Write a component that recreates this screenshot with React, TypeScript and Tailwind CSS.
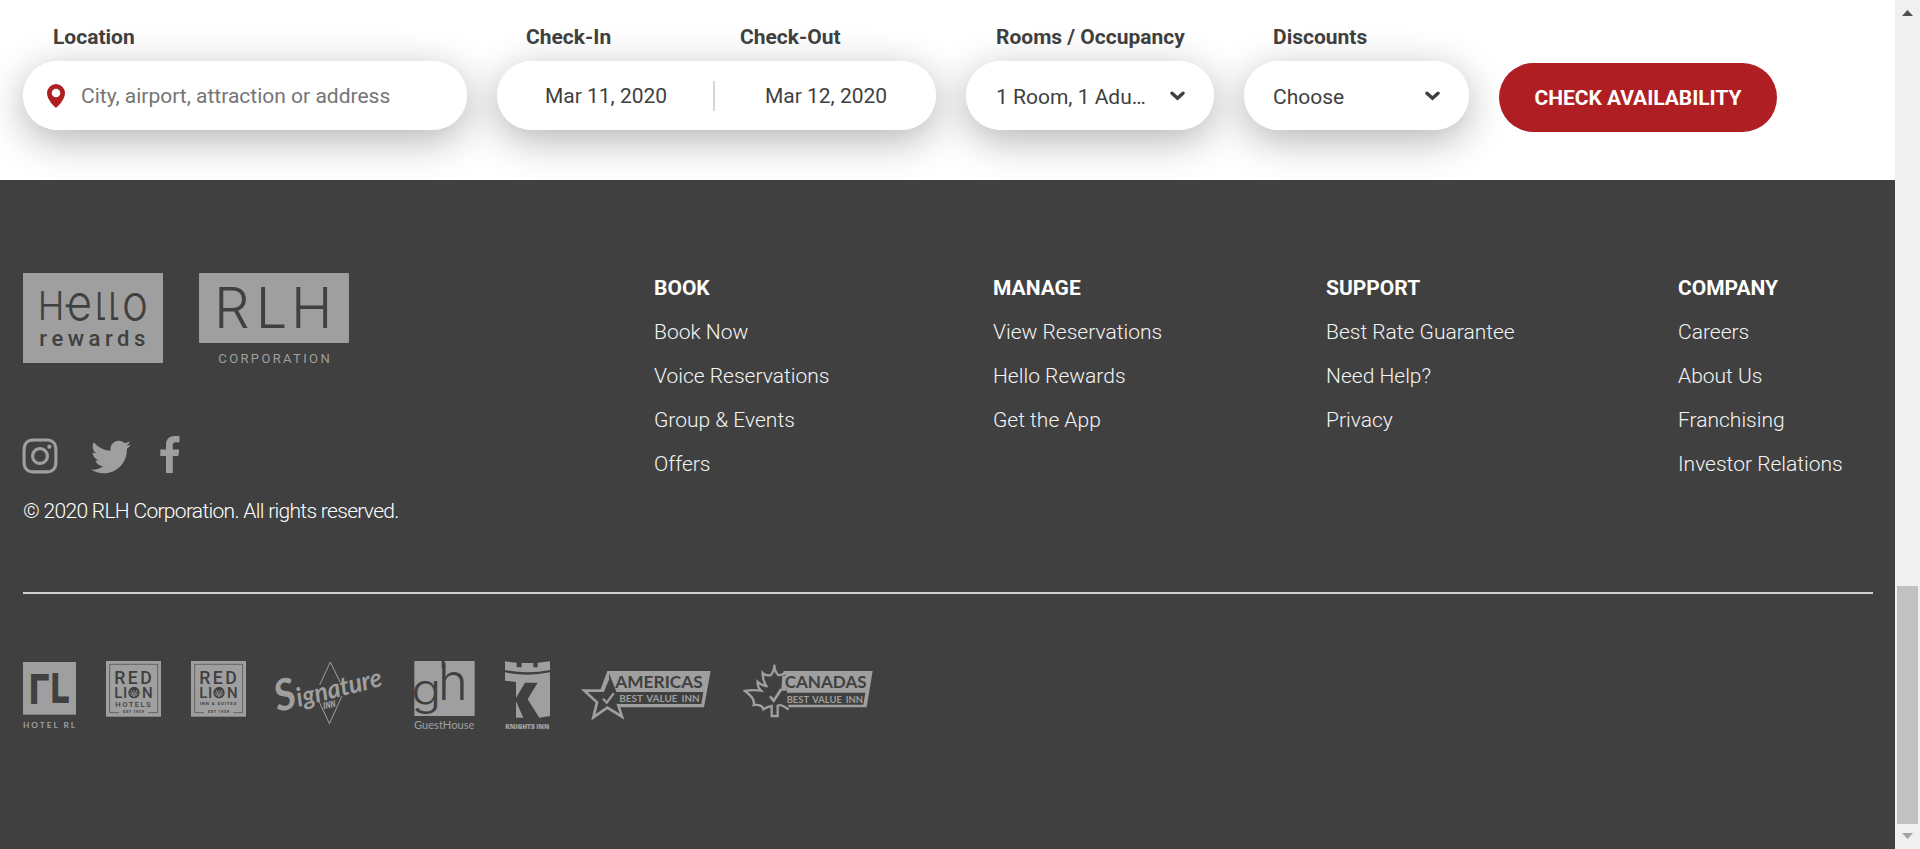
import React from "react";
import { FaInstagram, FaTwitter } from "react-icons/fa";

const pill =
  "relative flex h-[69px] items-center rounded-full bg-white before:absolute before:inset-0 before:-z-10 before:rounded-full before:shadow-[0_10px_40px_rgba(0,0,0,0.3)] before:content-['']";
const label = "h-6 text-[21px] leading-6 font-bold whitespace-nowrap";

function Chevron() {
  return (
    <svg className="h-[10px] w-[15px] shrink-0" viewBox="0 0 15 10" fill="none" stroke="#3f3f3f" strokeWidth="3.4">
      <path d="M2 2.2 7.5 7.2 13 2.2" strokeLinecap="round" />
    </svg>
  );
}

function SearchBar() {
  return (
    <section className="isolate flex h-[180px] items-start bg-white pt-[25px] pl-[23px] text-[#3f3f3f]">
      <div className="w-[444px]">
        <div className={label + " ml-[30px]"}>Location</div>
        <div className={pill + " mt-3 pl-[24px]"}>
          <svg className="h-6 w-[18px]" viewBox="0 0 18 24">
            <path
              fill="#ae1e23"
              fillRule="evenodd"
              d="M9 0a9 9 0 0 0-9 9c0 5.600 5 11.500 9 15 4-3.500 9-9.400 9-15a9 9 0 0 0-9-9zm0 4.700a4.300 4.300 0 1 1 0 8.600 4.300 4.300 0 0 1 0-8.600z"
            />
          </svg>
          <span className="ml-[16px] text-[#757575]">City, airport, attraction or address</span>
        </div>
      </div>
      <div className="ml-[30px] w-[439px]">
        <div className="flex">
          <div className={label + " ml-[29px] w-[214px]"}>Check-In</div>
          <div className={label}>Check-Out</div>
        </div>
        <div className={pill + " mt-3"}>
          <span className="w-[216px] pl-[2px] text-center">Mar 11, 2020</span>
          <span className="h-[30px] w-[2px] bg-[#d6d6d6]" />
          <span className="flex-1 pl-px text-center">Mar 12, 2020</span>
        </div>
      </div>
      <div className="ml-[30px] w-[248px]">
        <div className={label + " ml-[30px]"}>Rooms / Occupancy</div>
        <div className={pill + " mt-3 justify-between pr-[29px] pl-[30px]"}>
          <span className="pt-[2px]">1 Room, 1 Adu…</span>
          <Chevron />
        </div>
      </div>
      <div className="ml-[30px] w-[225px]">
        <div className={label + " ml-[29px]"}>Discounts</div>
        <div className={pill + " mt-3 justify-between pr-[29px] pl-[29px]"}>
          <span className="pt-[2px]">Choose</span>
          <Chevron />
        </div>
      </div>
      <button className="mt-[38px] ml-[30px] h-[69px] w-[278px] rounded-full bg-[#ae1e23] font-bold tracking-[-0.05px] text-white">
        CHECK AVAILABILITY
      </button>
    </section>
  );
}

const columns = [
  { title: "BOOK", width: "w-[339px]", links: ["Book Now", "Voice Reservations", "Group & Events", "Offers"] },
  { title: "MANAGE", width: "w-[333px]", links: ["View Reservations", "Hello Rewards", "Get the App"] },
  { title: "SUPPORT", width: "w-[352px]", links: ["Best Rate Guarantee", "Need Help?", "Privacy"] },
  { title: "COMPANY", width: "w-[180px]", links: ["Careers", "About Us", "Franchising", "Investor Relations"] },
];

const G = "#9f9f9f";
const D = "#404040";

function HelloRewards() {
  return (
    <svg className="h-[90px] w-[140px]" viewBox="69 39 420 270">
      <rect x="69" y="39" width="420" height="270" fill={G} />
      <g fill={D} fontFamily="Inter">
        <text y="180" fontWeight="300">
          <tspan x="113" fontSize="117" textLength="80" lengthAdjust="spacingAndGlyphs">H</tspan>
          <tspan x="200" fontSize="150" textLength="76" lengthAdjust="spacingAndGlyphs">e</tspan>
          <tspan x="284" fontSize="114">l</tspan>
          <tspan x="324" fontSize="114">l</tspan>
          <tspan x="366" fontSize="150" textLength="78" lengthAdjust="spacingAndGlyphs">o</tspan>
        </text>
        <rect x="197" y="133" width="16" height="9" />
        <path d="M297 176h18M337 176h18" stroke={D} strokeWidth="8" />
        <text x="118" y="258" fontFamily="Roboto" fontSize="66" fontWeight="500" textLength="318">rewards</text>
      </g>
    </svg>
  );
}

function RlhCorporation() {
  return (
    <svg className="h-[90px] w-[150px]" viewBox="597 39 450 270">
      <rect x="597" y="39" width="450" height="210" rx="3" fill={G} />
      <text y="204" fill={D} fontFamily="Inter" fontSize="168" fontWeight="300">
        <tspan x="642">R</tspan>
        <tspan x="767">L</tspan>
        <tspan x="873">H</tspan>
      </text>
      <text x="655" y="308" fill={G} fontFamily="Roboto" fontSize="39" textLength="334">
        CORPORATION
      </text>
    </svg>
  );
}

function HotelRl() {
  return (
    <svg className="h-[70px] w-[53px]" viewBox="69 60 159 210">
      <rect x="69" y="66" width="159" height="158" fill={G} />
      <g fill={D} stroke={D} strokeWidth="6" fontFamily="Liberation Sans" fontWeight="700" fontSize="124">
        <text x="89" y="188" textLength="56" lengthAdjust="spacingAndGlyphs">Γ</text>
        <text x="154" y="186" textLength="53" lengthAdjust="spacingAndGlyphs">L</text>
      </g>
      <text x="69" y="265" fill={G} fontFamily="Lato" fontSize="25" fontWeight="700" textLength="156">HOTEL RL</text>
    </svg>
  );
}

function RedLion({ inn = false }: { inn?: boolean }) {
  return (
    <svg className="h-[70px] w-[55px]" viewBox="318 60 165 210">
      <rect x="318" y="63" width="165" height="167" fill={G} />
      <path d="M357 218H329V73H473V218H445" fill="none" stroke={D} strokeOpacity="0.75" strokeWidth="2.500" />
      <g fill={D} fontFamily="Roboto" fontWeight="500">
        <text x="343" y="131" fontSize="53" textLength="112">RED</text>
        <text y="174" fontSize="45">
          <tspan x="343">L</tspan>
          <tspan x="369">I</tspan>
          <tspan x="387">O</tspan>
          <tspan x="426">N</tspan>
        </text>
        <circle cx="402" cy="158" r="17" />
        <path d="M393 150l9 21 9-21M390 158l7 10M414 158l-7 10M402 150v14" fill="none" stroke={G} strokeWidth="2.500" />
        {inn ? (
          <text x="344" y="195" fontSize="13" fontWeight="700" textLength="110">INN &amp; SUITES</text>
        ) : (
          <text x="346" y="200" fontSize="23" textLength="106">HOTELS</text>
        )}
        <text x="369" y="220" fontSize="12" fontWeight="700" textLength="63">EST 1959</text>
      </g>
    </svg>
  );
}

function SignatureInn() {
  return (
    <svg className="h-[70px] w-[108px] overflow-visible" viewBox="48 60 324 210">
      <path d="M179 135 211 66 241 128M178 186 208 251 246 168" fill="none" stroke={G} strokeWidth="3" />
      <text
        transform="translate(54 216) rotate(-14)"
        fill={G}
        stroke={D}
        strokeWidth="3"
        paintOrder="stroke"
        fontFamily="Lato"
        fontStyle="italic"
        fontWeight="700"
        textLength="326"
        lengthAdjust="spacingAndGlyphs"
      >
        <tspan fontSize="130">S</tspan>
        <tspan fontSize="78">ignature</tspan>
      </text>
      <text transform="translate(191 208) rotate(-12)" fill={G} fontFamily="Roboto Condensed, Roboto" fontStyle="italic" fontWeight="700" fontSize="29" textLength="38" lengthAdjust="spacingAndGlyphs">INN</text>
    </svg>
  );
}

function GuestHouse() {
  return (
    <svg className="h-[70px] w-[61px]" viewBox="462 60 183 210">
      <rect x="463" y="63" width="181" height="165" rx="3" fill={G} />
      <g fill={D} fontFamily="Inter" fontWeight="300">
        <text x="454" y="196" fontSize="128" textLength="90" lengthAdjust="spacingAndGlyphs">g</text>
        <text x="534" y="181" fontSize="152">h</text>
        <rect x="545" y="63" width="9" height="20" />
      </g>
      <text x="462" y="266" fill={G} fontFamily="Lato" fontSize="34" textLength="181" lengthAdjust="spacingAndGlyphs">GuestHouse</text>
    </svg>
  );
}

function KnightsInn() {
  return (
    <svg className="h-[70px] w-[45px]" viewBox="735 60 135 210">
      <g fill={G}>
        <path d="M735 64 770 68V82H785V69H820V82H833V68L870 64V90Q802 104 735 90z" />
        <path d="M735 97Q802 111 870 97V122L870 228 838 233 803 178 833 128H795L768 174V126L735 122z" />
        <path d="M768 184 790 233H768z" />
      </g>
      <text x="736" y="266" fill={G} stroke={G} strokeWidth="0.600" fontFamily="Open Sans" fontSize="23" fontWeight="800" textLength="132" lengthAdjust="spacingAndGlyphs">KNIGHTS INN</text>
    </svg>
  );
}

function AmericasBestValue() {
  return (
    <svg className="h-[70px] w-[131px]" viewBox="61 60 393 210">
      <path d="M143 93H453L433 202H180L150 150H122z" fill={G} />
      <path d="M160 156H431L425 192H178z" fill={D} />
      <path d="M168 160 148 108 130 152H74L112 187 101 232 143 203 187 230 176 196 185 197" fill={D} stroke={G} strokeWidth="8" />
      <path d="M148 100 172 160 176 190 150 180z" fill={D} />
      <path d="M130 176 141 188 162 160" fill="none" stroke={G} strokeWidth="7" />
      <text x="167" y="145" fill={D} fontFamily="Lato" fontSize="53" fontWeight="700" textLength="262" lengthAdjust="spacingAndGlyphs">AMERICAS</text>
      <text x="179" y="186" fill={G} fontFamily="Lato" fontSize="30" fontWeight="700" wordSpacing="5" textLength="241" lengthAdjust="spacingAndGlyphs">BEST VALUE INN</text>
    </svg>
  );
}

function CanadasBestValue() {
  return (
    <svg className="h-[70px] w-[130px]" viewBox="546 60 390 210">
      <path d="M668 93H935L917 202H664V158H655z" fill={G} />
      <path d="M655 158H913L907 194H655z" fill={D} />
      <path
        d="M683 209Q660 190 650 197V228H632V198Q620 200 607 208Q604 192 578 195Q584 176 552 153Q574 148 600 152Q588 140 590 125Q600 136 616 138Q604 118 605 99Q612 108 628 106Q640 95 640 74Q640 95 653 106Q663 106 672 99"
        fill={D}
        stroke={G}
        strokeWidth="7"
      />
      <path d="M650 110 667 107 660 150 664 160 658 192 640 190z" fill={D} />
      <path d="M664 107 661 152H676L682 107z" fill={G} />
      <path d="M627 169 638 182 661 147" fill="none" stroke={G} strokeWidth="8" />
      <text x="671" y="145" fill={D} fontFamily="Lato" fontSize="53" fontWeight="700" textLength="246" lengthAdjust="spacingAndGlyphs">CANADAS</text>
      <text x="677" y="188" fill={G} fontFamily="Lato" fontSize="30" fontWeight="700" wordSpacing="5" textLength="229" lengthAdjust="spacingAndGlyphs">BEST VALUE INN</text>
    </svg>
  );
}

function Footer() {
  return (
    <footer className="relative h-[669px] bg-[#404040] px-[23px] pt-[86px] text-white">
      <div className="flex h-[326px]">
        <div className="w-[631px] pt-[7px]">
          <div className="flex gap-9">
            <HelloRewards />
            <RlhCorporation />
          </div>
          <div className="mt-[73px] flex h-[40px] items-center text-[#9f9f9f]">
            <FaInstagram className="-ml-[3px] size-[40px]" />
            <FaTwitter className="mt-[1px] ml-[31px] size-[40px]" />
            <svg className="mb-[3px] ml-[29px] h-[37px] w-[20px]" viewBox="0 0 20 37" fill="currentColor">
              <path d="M19.500.3v5.900H16c-2.700 0-3.200 1.300-3.200 3.200v4.100h6.500l-.9 6.600h-5.600V37H6V20.100H.3v-6.600H6V8.600C6 3 9.500 0 14.500 0c2.400 0 4.400.2 5 .3z" />
            </svg>
          </div>
          <p className="mt-[21px] h-[28px] leading-[28px] font-light tracking-[-0.69px]">
            © 2020 RLH Corporation. All rights reserved.
          </p>
        </div>
        {columns.map((c) => (
          <nav key={c.title} className={c.width}>
            <h3 className="leading-[44px] font-bold">{c.title}</h3>
            {c.links.map((l) => (
              <a key={l} className="block leading-[44px] font-light whitespace-nowrap text-[#f4f4f4]">
                {l}
              </a>
            ))}
          </nav>
        ))}
      </div>
      <hr className="h-[2px] w-[1850px] border-0 bg-[#d0d0d0]" />
      <div className="mt-[66px] flex gap-[30px]">
        <HotelRl />
        <RedLion />
        <RedLion inn />
        <SignatureInn />
        <GuestHouse />
        <KnightsInn />
        <AmericasBestValue />
        <div className="ml-[2px]">
          <CanadasBestValue />
        </div>
      </div>
    </footer>
  );
}

function Scrollbar() {
  return (
    <div className="flex w-[25px] flex-col items-center bg-[#f0f0f0]">
      <svg className="mt-[10px] h-[6px] w-[11px]" viewBox="0 0 11 6">
        <path d="M0 6 5.500 0 11 6z" fill="#505050" />
      </svg>
      <div className="mt-[570px] mr-px h-[238px] w-[21px] bg-[#c1c1c1]" />
      <svg className="mt-[9px] h-[6px] w-[11px]" viewBox="0 0 11 6">
        <path d="M0 0H11L5.500 6z" fill="#a3a3a3" />
      </svg>
    </div>
  );
}

export default function App() {
  return (
    <div className="flex h-[849px] w-[1920px] overflow-hidden text-[21px] leading-[28px] font-['Roboto',sans-serif]">
      <main className="w-[1895px]">
        <SearchBar />
        <Footer />
      </main>
      <Scrollbar />
    </div>
  );
}
